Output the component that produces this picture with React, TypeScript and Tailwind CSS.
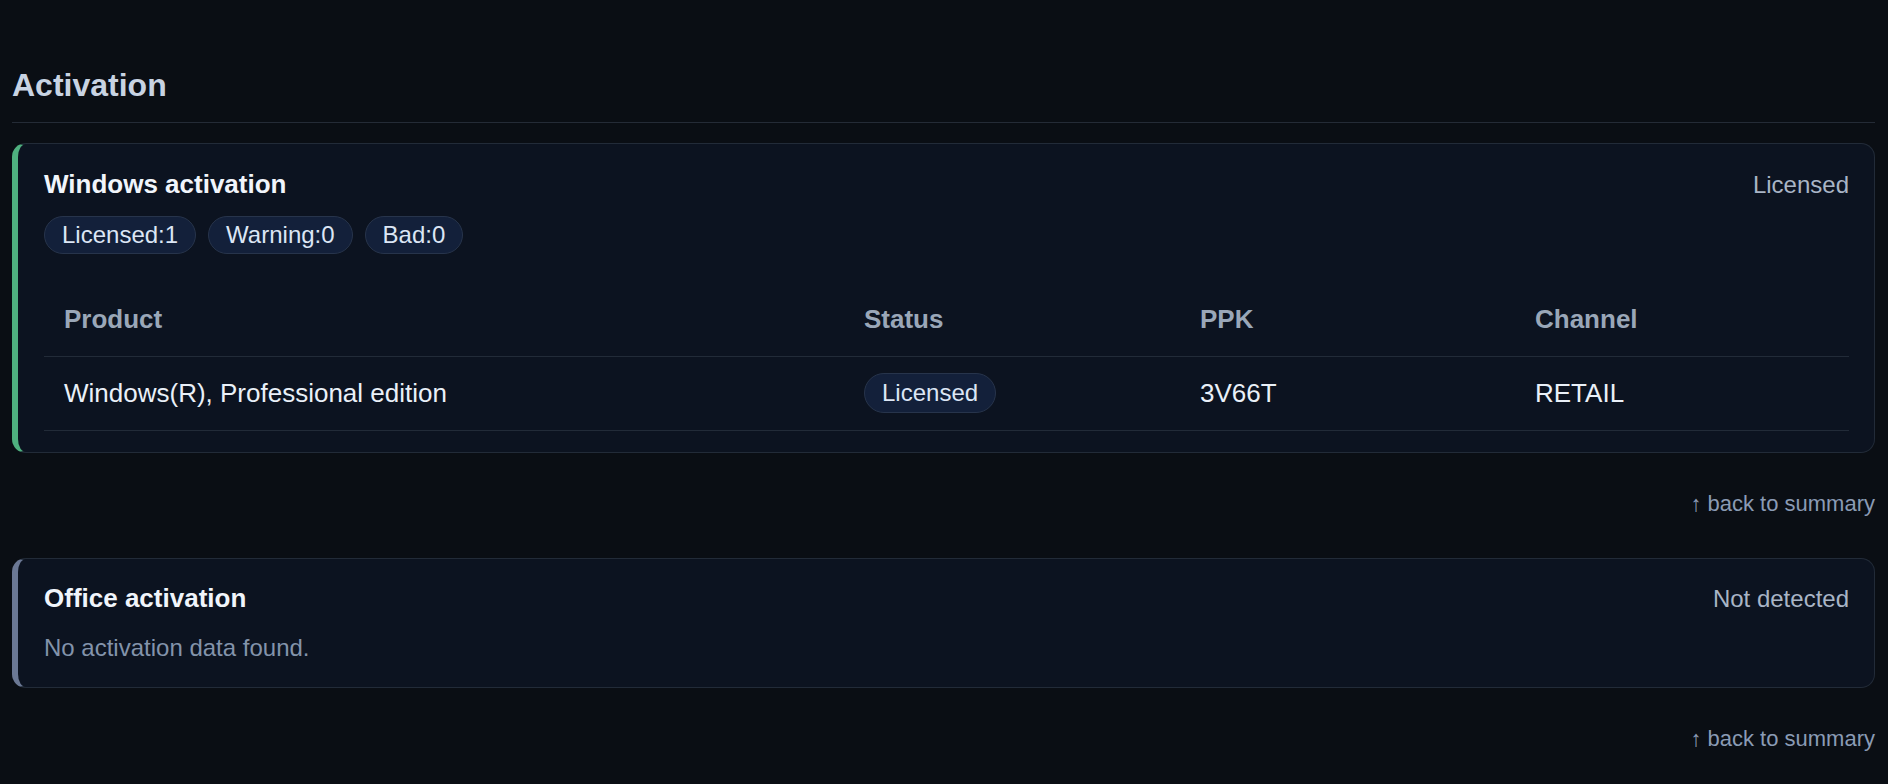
import React from 'react'

type Row = {
    product: string
    status: string
    ppk: string
    channel: string
}

const rows: Row[] = [
    { product: 'Windows(R), Professional edition', status: 'Licensed', ppk: '3V66T', channel: 'RETAIL' },
]

const cols = 'grid grid-cols-[800px_336px_335px_1fr]'

const Pill = ({ children, className = '' }: { children: React.ReactNode; className?: string }) => (
    <span
        className={`inline-flex items-center rounded-full border border-[#27344b] bg-[#13203a] px-[17px] text-[24px] leading-none text-[#dce6f5] ${className}`}
    >
        {children}
    </span>
)

const BackLink = () => (
    <div className="mt-[38px] text-right text-[22px] leading-[26px] text-[#8a9bb5]">
        <a href="#summary">↑ back to summary</a>
    </div>
)

export default function App() {
    return (
        <div
            className="min-h-screen bg-[#0a0e14] pl-[12px] pr-[13px] pb-[30px]"
            style={{ fontFamily: '"Liberation Sans", Arial, sans-serif' }}
        >
            <h2 className="border-b border-[#242b36] pt-[66px] pb-[18px] text-[32px] font-bold leading-[38px] text-[#c8d3e2]">
                Activation
            </h2>

            {/* Windows */}
            <section className="mt-[20px] rounded-[14px] border border-[#222b38] border-l-[6px] border-l-[#4fb07f] bg-[#0c1320] pl-[26px] pr-[25px] pt-[23px] pb-[21px]">
                <div className="flex items-baseline justify-between">
                    <h3 className="text-[26px] font-bold leading-[31px] text-[#f1f5fb]">Windows activation</h3>
                    <span className="text-[24px] text-[#a9b5c6]">Licensed</span>
                </div>
                <div className="mt-[13px] flex gap-[12px]">
                    <Pill className="h-[38px]">Licensed:1</Pill>
                    <Pill className="h-[38px]">Warning:0</Pill>
                    <Pill className="h-[38px]">Bad:0</Pill>
                </div>

                <div className="mt-[28px]">
                    <div className={`${cols} border-b border-[#222b38] text-[26px] font-bold leading-[31px] text-[#9aa7b8]`}>
                        <div className="px-[20px] pt-[22px] pb-[21px]">Product</div>
                        <div className="px-[20px] pt-[22px] pb-[21px]">Status</div>
                        <div className="px-[20px] pt-[22px] pb-[21px]">PPK</div>
                        <div className="px-[20px] pt-[22px] pb-[21px]">Channel</div>
                    </div>
                    {rows.map((r) => (
                        <div
                            key={r.product}
                            className={`${cols} items-center border-b border-[#222b38] text-[26px] leading-[31px] text-[#eaf0f8]`}
                        >
                            <div className="px-[20px] pt-[16px] pb-[17px]">{r.product}</div>
                            <div className="px-[20px] pt-[16px] pb-[17px]">
                                <Pill className="h-[40px]">{r.status}</Pill>
                            </div>
                            <div className="px-[20px] pt-[16px] pb-[17px]">{r.ppk}</div>
                            <div className="px-[20px] pt-[16px] pb-[17px]">{r.channel}</div>
                        </div>
                    ))}
                </div>
            </section>

            <BackLink />

            {/* Office */}
            <section className="mt-[41px] rounded-[14px] border border-[#222b38] border-l-[6px] border-l-[#6b7894] bg-[#0c1320] pl-[26px] pr-[25px] pt-[22px] pb-[25px]">
                <div className="flex items-baseline justify-between">
                    <h3 className="text-[26px] font-bold leading-[31px] text-[#f1f5fb]">Office activation</h3>
                    <span className="text-[24px] text-[#a9b5c6]">Not detected</span>
                </div>
                <p className="mt-[17px] text-[24px] leading-[28px] text-[#8393ab]">No activation data found.</p>
            </section>

            <BackLink />
        </div>
    )
}
